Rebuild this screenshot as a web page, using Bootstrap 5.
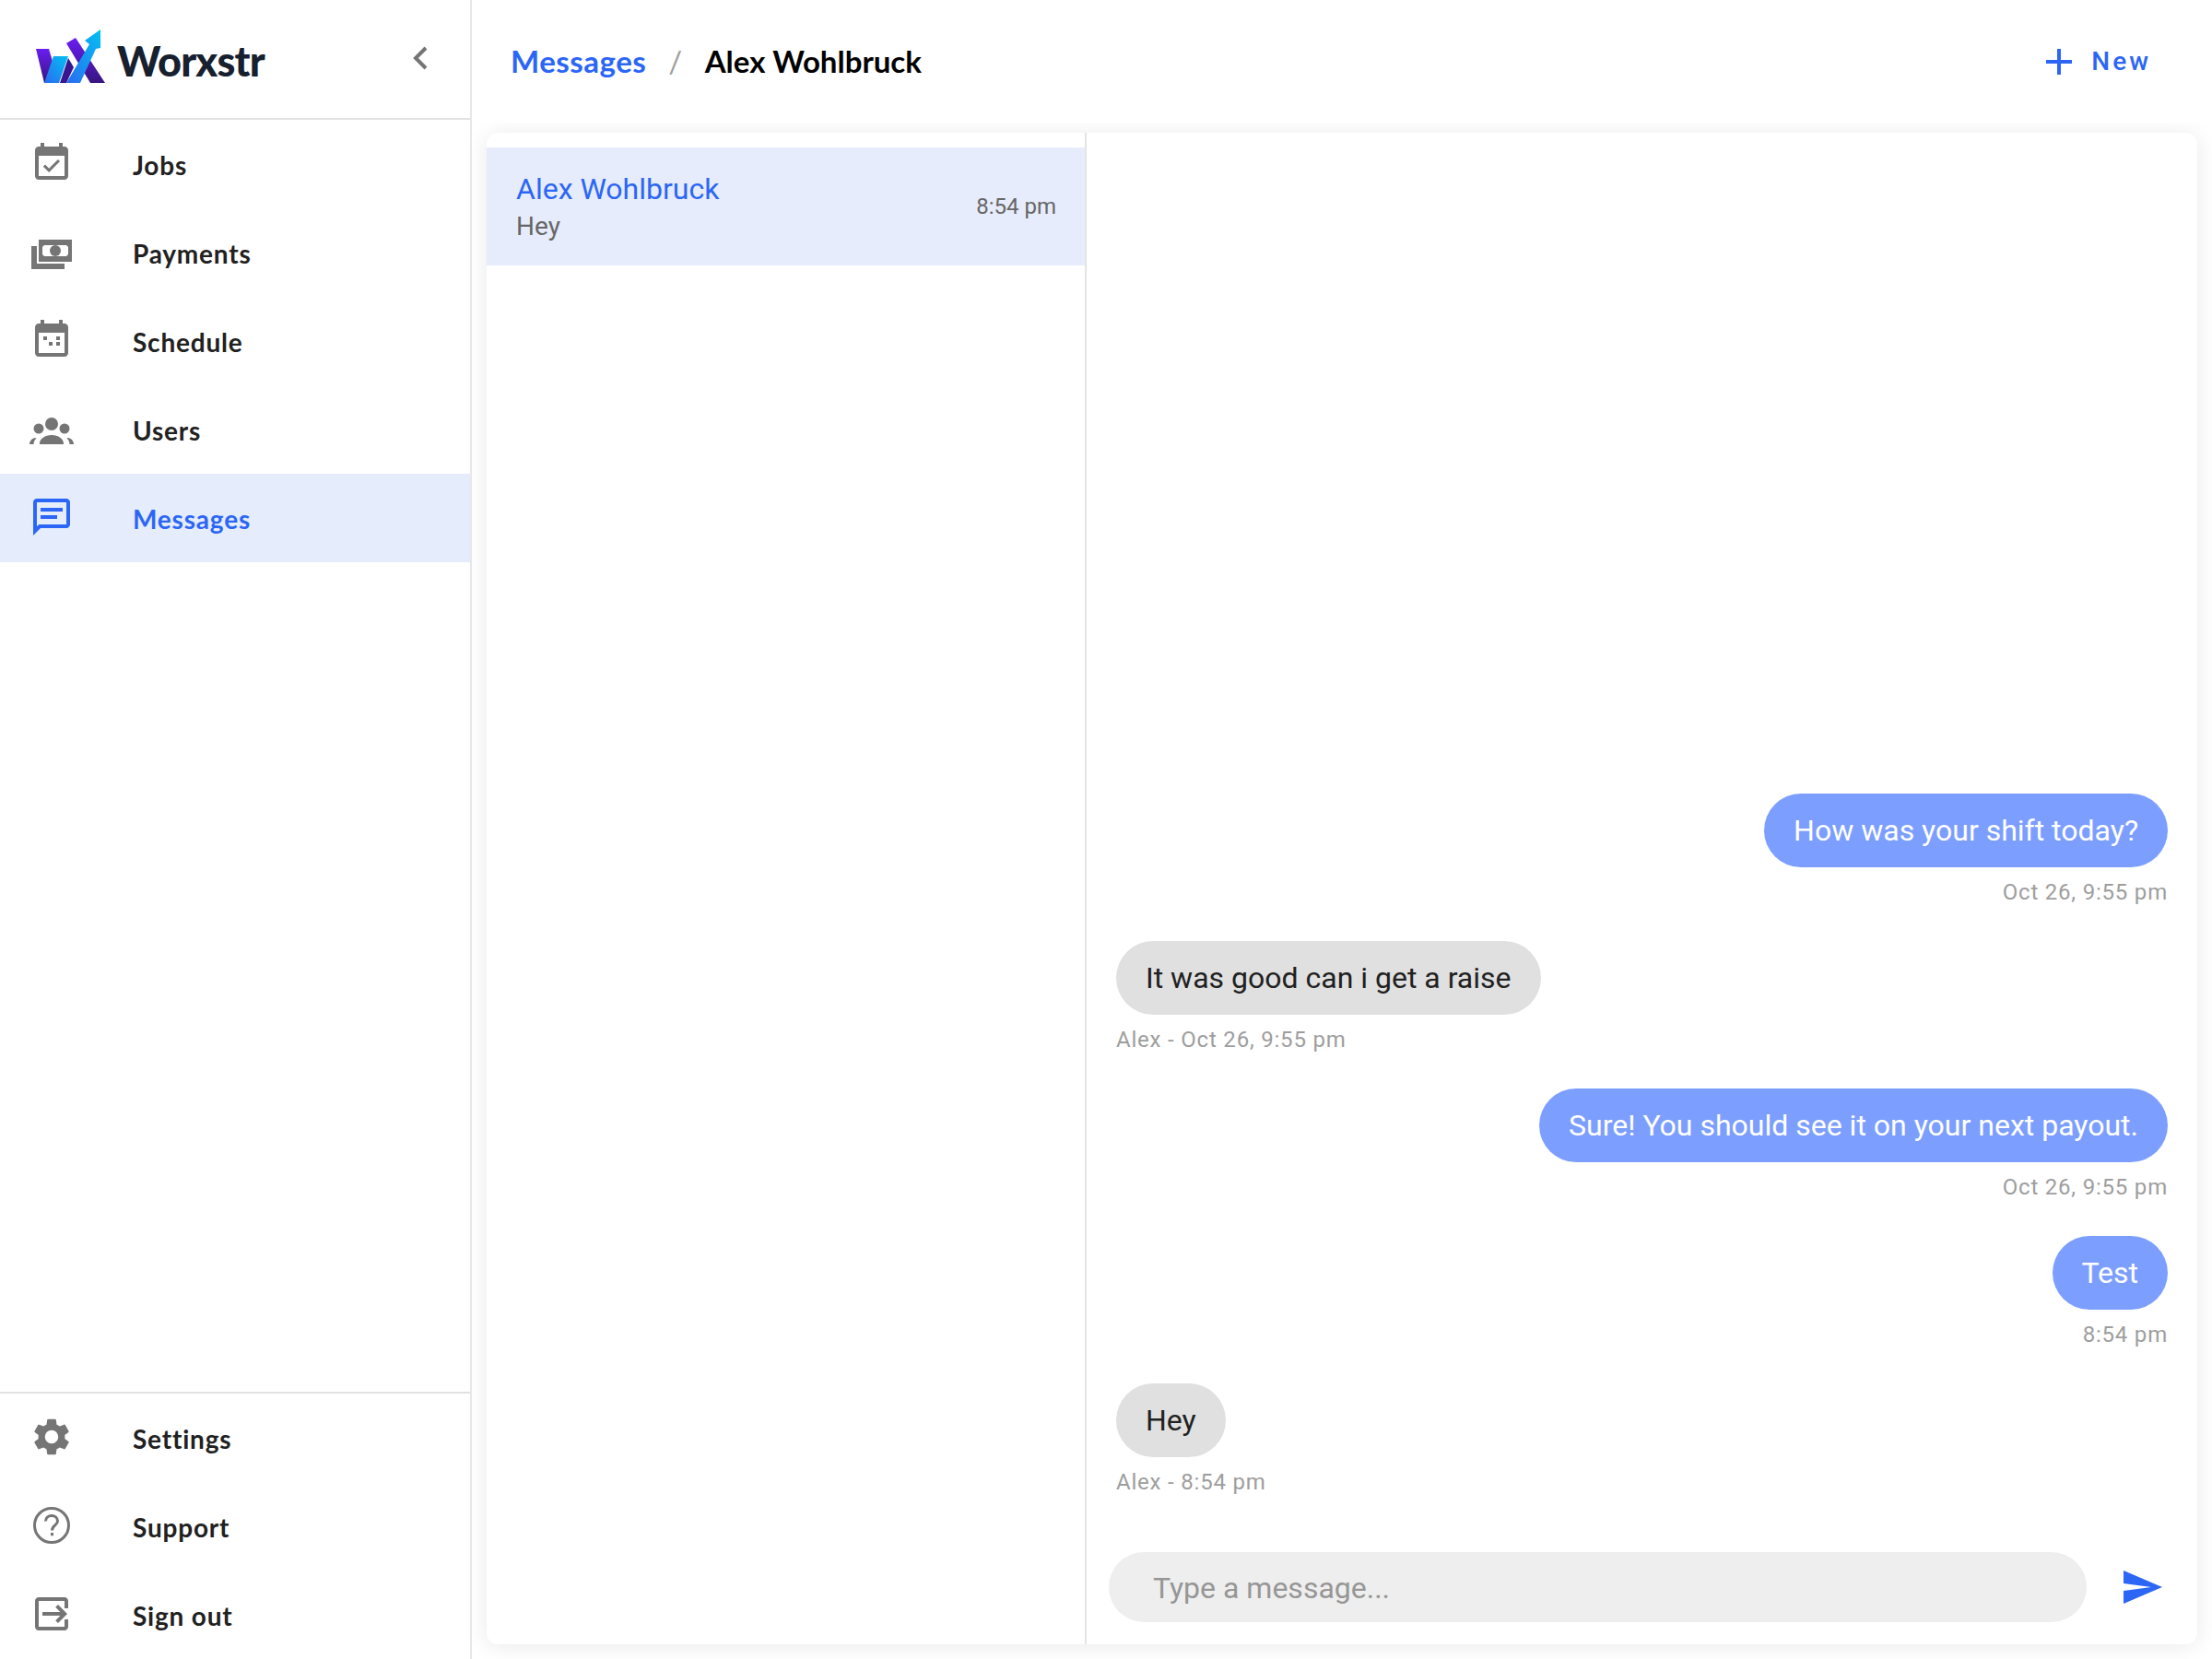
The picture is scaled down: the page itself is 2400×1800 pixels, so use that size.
<!doctype html>
<html lang="en"><head><meta charset="utf-8"><title>Messages</title>
<link href="https://cdn.jsdelivr.net/npm/bootstrap@5.3.0/dist/css/bootstrap.min.css" rel="stylesheet">
<style>
html,body{height:100%;margin:0;background:#fff;overflow:hidden}
body{font-family:Roboto,sans-serif}
.app-shell{width:2400px;height:1800px}
.side{width:512px;border-right:2px solid #e8e8e8;font-family:Lato,sans-serif}
.brand{height:130px;border-bottom:2px solid #e2e2e2;padding:0 46px 2px 39px}
.brand-logo{margin-top:-5px}
.brand-word{font-family:Lato,sans-serif;font-weight:900;font-size:45px;letter-spacing:-.8px;color:#17202e;margin-left:12px;line-height:1;padding-top:6px}
.nav-row{height:96px;padding:2px 0 0 32px;color:#212121;font-size:28px;font-weight:700;letter-spacing:.8px;text-decoration:none}
.nav-row svg{width:48px;height:48px;fill:#757575;flex:none;margin-right:64px;transform:translateY(-2px)}
.nav-row svg.low{transform:translateY(3px)}
.nav-row svg.mid{transform:translateY(2px)}
.nav-row.on{background:#e5ecfb;color:#2b66f6}
.nav-row.on svg{fill:#2b66f6}
.foot{border-top:2px solid #e2e2e2}
.main-area{background:#fff}
.top{height:133px;padding:0 66px 0 42px;background:#fff;position:relative;z-index:2}
.crumb{font-family:Lato,sans-serif;font-weight:700;font-size:33px;letter-spacing:.5px;color:#000}
.crumb a{color:#2b66f6;text-decoration:none}
.crumb i{font-style:normal;font-weight:400;color:#9e9e9e;margin:0 24px}
.crumb b{font-weight:700;letter-spacing:0}
.add{color:#2b66f6;font-weight:500;font-size:28px;letter-spacing:3px;text-decoration:none}
.add svg{width:30px;height:30px;margin-right:20px}
.wrap{padding:11px 16px 16px}
.panel{height:1640px;background:#fff;border-radius:12px;box-shadow:0 2px 24px rgba(0,0,0,.09)}
.threads{width:651px;border-right:2px solid #e4e4e4;padding-top:16px}
.thread{height:128px;padding:0 31px 0 32px;background:#e6ecfb}
.t-name{font-size:32px;color:#2b66f6;line-height:40px;font-weight:400;margin-top:4px}
.t-last{font-size:28px;color:#666;line-height:42px}
.t-time{font-size:24px;color:#666}
.chat{min-width:0}
.stream{padding:0 32px 62px 32px;gap:0}
.bub{height:80px;border-radius:40px;padding:0 32px;font-size:32px;line-height:80px}
.mine{background:#7c9eff;color:#fff}
.theirs{background:#e0e0e0;color:#212121}
.stamp{font-size:24px;letter-spacing:.8px;color:#9e9e9e;line-height:28px;margin:13px 0 39px}
.stream .stamp:last-child{margin-bottom:0}
.composer{padding:0 24px 24px 24px}
.msg-box{height:76px;flex:1;background:#eee;border-radius:38px;border:0;padding:2px 48px 0;font-size:32px;color:#757575;line-height:74px}
.msg-box::placeholder{color:#969696}
.send{width:48px;height:48px;fill:#2b66f6;margin:0 12px 0 36px}
</style></head>
<body>
<div class="app-shell d-flex">
<aside class="side d-flex flex-column">
  <div class="brand d-flex align-items-center">
    <svg class="brand-logo" width="76" height="60" viewBox="39 30 76 60" aria-label="logo">
      <defs>
        <linearGradient id="gp" x1="0" y1="0" x2="0" y2="1"><stop offset="0" stop-color="#6a1df0"/><stop offset="1" stop-color="#37157f"/></linearGradient>
        <linearGradient id="gb" x1="0" y1="1" x2="1" y2="0"><stop offset="0" stop-color="#2a6cf0"/><stop offset="1" stop-color="#03c0f2"/></linearGradient>
      </defs>
      <polygon points="39,52 53,52 61,79 55,89 48,89" fill="url(#gp)"/>
      <polygon points="65,89 72,89 80,72 74,62" fill="#3a1590"/>
      <polygon points="72,46 82,40 114,89 98,89" fill="url(#gp)"/>
      <polygon points="48,89 58,60 74,60 64,89" fill="url(#gb)"/>
      <polygon points="72,89 87,89 104,52 109,51 109,31 92,43 97,47" fill="url(#gb)"/>
    </svg>
    <span class="brand-word">Worxstr</span>
    <svg class="ms-auto" width="16" height="26" viewBox="0 0 16 26"><path d="M14 2 3 13l11 11" fill="none" stroke="#757575" stroke-width="4"/></svg>
  </div>
  <a class="nav-row d-flex align-items-center" href="#"><svg viewBox="0 0 24 24"><path d="M16.53 11.06 15.47 10l-4.88 4.88-2.12-2.12-1.06 1.06L10.59 17l5.94-5.94zM19 3h-1V1h-2v2H8V1H6v2H5c-1.11 0-1.99.9-1.99 2L3 19c0 1.1.89 2 2 2h14c1.1 0 2-.9 2-2V5c0-1.1-.9-2-2-2zm0 16H5V8h14v11z"/></svg>Jobs</a>
  <a class="nav-row d-flex align-items-center" href="#"><svg class="low" viewBox="0 0 48 48"><path fill-rule="evenodd" d="M10 6h36v24H10zM16 12l-2 2v8l2 2h24l2-2v-8l-2-2zM2 13h6v19h30v6H2z"/><circle cx="28" cy="18" r="6"/></svg>Payments</a>
  <a class="nav-row d-flex align-items-center" href="#"><svg viewBox="0 0 24 24"><path d="M19 3h-1V1h-2v2H8V1H6v2H5c-1.11 0-1.99.9-1.99 2L3 19c0 1.1.89 2 2 2h14c1.1 0 2-.9 2-2V5c0-1.1-.9-2-2-2zm0 16H5V8h14v11zM7.5 10h2v2h-2zM14.500 10h2v2h-2zM10.500 13h2v2h-2zM14.500 13h2v2h-2z"/></svg>Schedule</a>
  <a class="nav-row d-flex align-items-center" href="#"><svg class="mid" viewBox="0 0 48 48"><circle cx="24" cy="15" r="7"/><circle cx="10" cy="20" r="5.500"/><circle cx="38" cy="20" r="5.500"/><path d="M11 37v-1c0-5 6-9 13-9s13 4 13 9v1zM0 37c0-3 2-6 6-7l1.500.5c-2 2-3 4-3 6.500zM48 37c0-3-2-6-6-7l-1.500.5c2 2 3 4 3 6.500z"/></svg>Users</a>
  <a class="nav-row on d-flex align-items-center" href="#"><svg viewBox="0 0 24 24"><path d="M20 2H4c-1.100 0-2 .9-2 2v18l4-4h14c1.100 0 2-.9 2-2V4c0-1.100-.9-2-2-2zm0 14H5.170L4 17.170V4h16v12zM6 7h12v2H6zM6 11h9v2H6z"/></svg>Messages</a>
  <div class="foot mt-auto">
    <a class="nav-row d-flex align-items-center" href="#"><svg viewBox="0 0 24 24"><path d="M19.140 12.940c.04-.3.06-.61.06-.94 0-.32-.02-.64-.07-.94l2.030-1.580c.18-.14.23-.41.12-.61l-1.920-3.320c-.12-.22-.37-.29-.59-.22l-2.390.96c-.5-.38-1.030-.7-1.620-.94l-.36-2.540c-.04-.24-.24-.41-.48-.41h-3.840c-.24 0-.43.17-.47.41l-.36 2.540c-.59.24-1.130.57-1.620.94l-2.390-.96c-.22-.08-.47 0-.59.22L2.740 8.870c-.12.21-.08.47.12.61l2.030 1.580c-.05.3-.09.63-.09.94s.02.64.07.94l-2.030 1.580c-.18.14-.23.41-.12.61l1.920 3.320c.12.22.37.29.59.22l2.390-.96c.5.38 1.030.7 1.620.94l.36 2.540c.05.24.24.41.48.41h3.840c.24 0 .44-.17.47-.41l.36-2.540c.59-.24 1.130-.56 1.620-.94l2.390.96c.22.08.47 0 .59-.22l1.920-3.320c.12-.22.07-.47-.12-.61l-2.010-1.580zM12 15.600c-1.980 0-3.600-1.620-3.600-3.600s1.620-3.600 3.600-3.600 3.600 1.620 3.600 3.600-1.620 3.600-3.600 3.600z"/></svg>Settings</a>
    <a class="nav-row d-flex align-items-center" href="#"><svg viewBox="0 0 48 48"><circle cx="24" cy="24" r="18.500" fill="none" stroke="#757575" stroke-width="3"/><path d="M17.500 19.500c0-3.600 2.900-6 6.500-6s6.500 2.400 6.500 5.800c0 4.700-6 4.700-6 10.200" fill="none" stroke="#757575" stroke-width="3"/><rect x="23" y="32" width="3" height="3.200"/></svg>Support</a>
    <a class="nav-row d-flex align-items-center" href="#"><svg viewBox="0 0 24 24"><path d="M5 3h14c1.100 0 2 .9 2 2v4h-2V5H5v14h14v-4h2v4c0 1.100-.9 2-2 2H5c-1.100 0-2-.9-2-2V5c0-1.100.9-2 2-2zM14.090 8.410 16.670 11H7v2h9.670l-2.580 2.590L15.500 17l5-5-5-5z"/></svg>Sign out</a>
  </div>
</aside>
<main class="main-area flex-grow-1 d-flex flex-column">
  <header class="top d-flex align-items-center justify-content-between">
    <div class="crumb"><a href="#">Messages</a><i>/</i><b>Alex Wohlbruck</b></div>
    <a class="add d-flex align-items-center" href="#"><svg viewBox="0 0 30 30"><path d="M13 1h4v12h12v4H17v12h-4V17H1v-4h12z" fill="#2b66f6"/></svg>New</a>
  </header>
  <div class="wrap flex-grow-1">
    <div class="panel d-flex">
      <section class="threads">
        <div class="thread d-flex align-items-center justify-content-between">
          <div><div class="t-name">Alex Wohlbruck</div><div class="t-last">Hey</div></div>
          <div class="t-time">8:54 pm</div>
        </div>
      </section>
      <section class="chat flex-grow-1 d-flex flex-column">
        <div class="stream flex-grow-1 d-flex flex-column justify-content-end">
          <div class="bub mine align-self-end">How was your shift today?</div><div class="stamp text-end">Oct 26, 9:55 pm</div>
          <div class="bub theirs align-self-start">It was good can i get a raise</div><div class="stamp">Alex - Oct 26, 9:55 pm</div>
          <div class="bub mine align-self-end">Sure! You should see it on your next payout.</div><div class="stamp text-end">Oct 26, 9:55 pm</div>
          <div class="bub mine align-self-end">Test</div><div class="stamp text-end">8:54 pm</div>
          <div class="bub theirs align-self-start">Hey</div><div class="stamp">Alex - 8:54 pm</div>
        </div>
        <div class="composer d-flex align-items-center">
          <input class="msg-box" type="text" placeholder="Type a message...">
          <svg class="send" viewBox="0 0 24 24"><path d="M2.010 21 23 12 2.010 3 2 10l15 2-15 2z"/></svg>
        </div>
      </section>
    </div>
  </div>
</main>
</div>
<script src="https://cdn.jsdelivr.net/npm/bootstrap@5.3.0/dist/js/bootstrap.bundle.min.js"></script>
</body></html>
